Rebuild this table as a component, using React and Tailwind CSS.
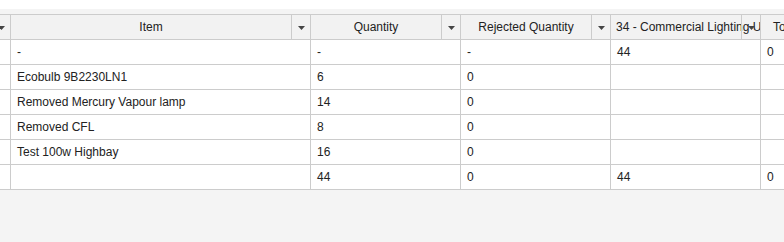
import React from "react"

const columns = [
	{ key: "sel", label: "", width: "w-[11px]" },
	{ key: "item", label: "Item", width: "w-[300px]" },
	{ key: "qty", label: "Quantity", width: "w-[150px]" },
	{ key: "rej", label: "Rejected Quantity", width: "w-[150px]" },
	{ key: "c34", label: "34 - Commercial Lighting Upgrade", width: "w-[150px]" },
	{ key: "total", label: "Total Quantity", width: "w-[150px]", left: true },
]

const rows = [
	["", "-", "-", "-", "44", "0"],
	["", "Ecobulb 9B2230LN1", "6", "0", "", ""],
	["", "Removed Mercury Vapour lamp", "14", "0", "", ""],
	["", "Removed CFL", "8", "0", "", ""],
	["", "Test 100w Highbay", "16", "0", "", ""],
	["", "", "44", "0", "44", "0"],
]

function Arrow() {
	return (
		<svg width="7" height="4" viewBox="0 0 7 4" className="mt-[2px]">
			<path d="M0 0h7L3.5 4z" fill="#444" />
		</svg>
	)
}

function HeaderCell({ col }) {
	return (
		<div className={`${col.width} shrink-0 relative h-full overflow-hidden border-r border-[#ccc]`}>
			{col.key !== "sel" && (
				<div
					className={`h-full leading-[24px] whitespace-nowrap ${
						col.left ? "pl-[12px]" : "w-[calc(100%-19px)] px-[5px] text-center"
					}`}>
					{col.label}
				</div>
			)}
			{col.key !== "total" && (
				<div className="absolute top-0 right-0 h-full w-[19px] border-l border-[#ccc] flex items-center justify-center">
					<Arrow />
				</div>
			)}
		</div>
	)
}

export default function App() {
	return (
		<div
			className="w-[784px] h-[242px] bg-[#f4f4f4] text-[12px] text-[#222] overflow-hidden"
			style={{ fontFamily: '"Liberation Sans", Arial, sans-serif' }}>
			<div className="h-[9px] bg-white" />
			<div className="mt-[5px] border-t border-[#ccc] overflow-hidden">
				<div className="flex h-[25px] bg-[#f2f2f2] border-b border-[#ccc]">
					{columns.map((col) => (
						<HeaderCell key={col.key} col={col} />
					))}
				</div>
				{rows.map((row, i) => (
					<div key={i} className="flex h-[25px] bg-white border-b border-[#ccc]">
						{row.map((val, j) => (
							<div
								key={j}
								className={`${columns[j].width} shrink-0 h-full flex items-center pl-[6px] whitespace-nowrap overflow-hidden border-r border-[#ccc]`}>
								{val}
							</div>
						))}
					</div>
				))}
			</div>
		</div>
	)
}
